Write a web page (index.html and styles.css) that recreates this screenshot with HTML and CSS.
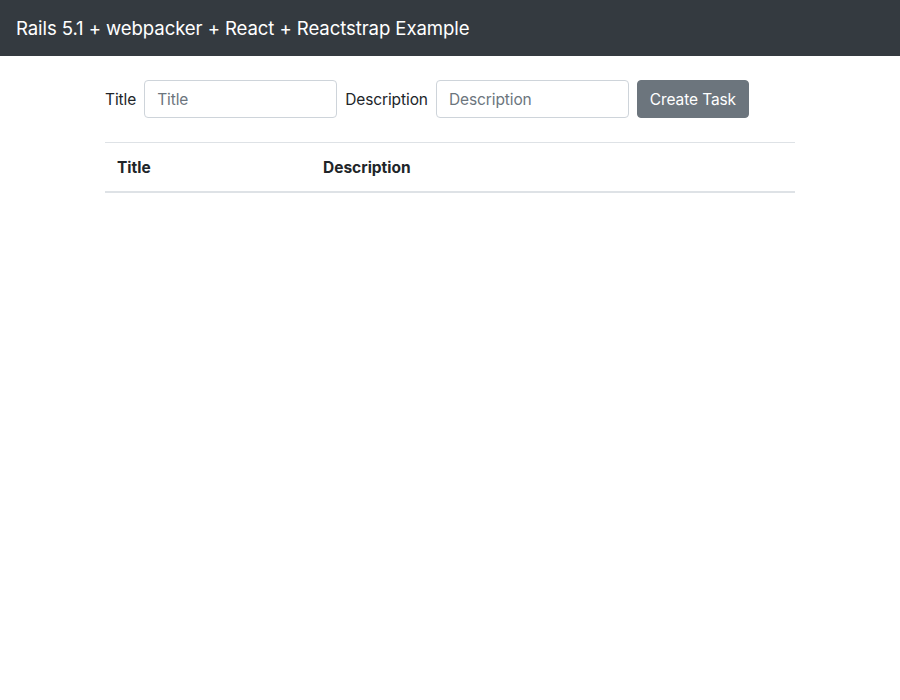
FILE: index.html
```html
<!DOCTYPE html>
<html>
<head>
<meta charset="utf-8">
<link rel="stylesheet" href="styles.css">
</head>
<body>
<nav class="navbar"><span class="brand">Rails 5.1 + webpacker + React + Reactstrap Example</span></nav>
<main class="container">
  <form class="task-form">
    <label class="label">Title</label>
    <input class="input" type="text" placeholder="Title">
    <label class="label">Description</label>
    <input class="input" type="text" placeholder="Description">
    <button class="btn" type="button">Create Task</button>
  </form>
  <table class="table">
    <thead>
      <tr><th class="col-title">Title</th><th>Description</th></tr>
    </thead>
    <tbody></tbody>
  </table>
</main>
</body>
</html>
```
FILE: styles.css
```css
* { box-sizing: border-box; }
body {
  margin: 0;
  font-family: Inter, "Noto Sans", "Liberation Sans", sans-serif;
  font-size: 16px;
  line-height: 1.5;
  color: #212529;
  background: #fff;
}
.navbar {
  height: 56px;
  background: #343a40;
  display: flex;
  align-items: center;
  padding: 0 16px;
}
.brand {
  color: #fff;
  font-size: 18.6px;
  letter-spacing: -0.1px;
  padding-top: 2px;
}
.container {
  width: 720px;
  margin: 0 auto;
  padding: 0 15px;
}
.task-form {
  display: flex;
  align-items: center;
  gap: 8px;
  margin: 24px 0;
}
.label {
  font-size: 15.5px;
  letter-spacing: -0.1px;
  padding-top: 2px;
}
.input {
  width: 193px;
  height: 38px;
  padding: 6px 12px;
  border: 1px solid #ced4da;
  border-radius: 4px;
  font: inherit;
  font-size: 15.5px;
  letter-spacing: -0.1px;
  color: #495057;
  background: #fff;
}
.input::placeholder { color: #6c757d; }
.btn {
  height: 38px;
  width: 112px;
  padding: 7px 6px 5px;
  border: 1px solid #6c757d;
  border-radius: 4px;
  background: #6c757d;
  color: #fff;
  font: inherit;
  font-size: 15.5px;
  letter-spacing: -0.1px;
}
.table {
  width: 100%;
  border-collapse: collapse;
}
.table th {
  text-align: left;
  font-weight: 700;
  font-size: 15.5px;
  letter-spacing: 0;
  padding: 13px 12px 12px;
  border-top: 1px solid #dee2e6;
  border-bottom: 2px solid #dee2e6;
}
.col-title { width: 206px; }
```
